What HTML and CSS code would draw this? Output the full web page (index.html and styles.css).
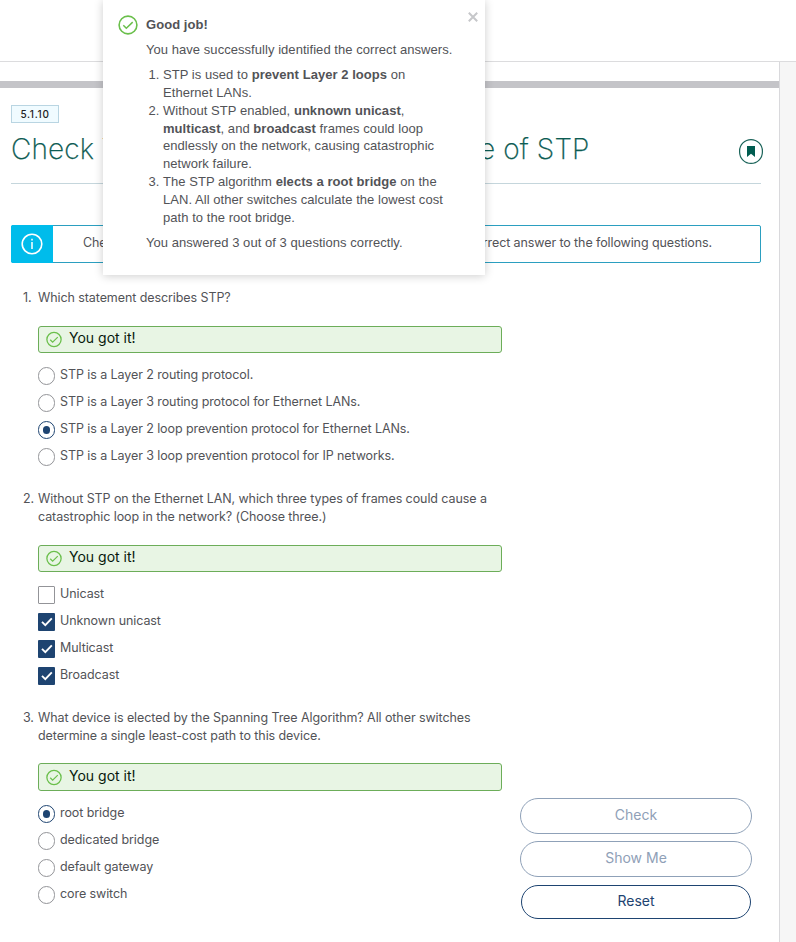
FILE: index.html
```html
<!DOCTYPE html>
<html lang="en">
<head>
<meta charset="utf-8">
<title>Check Your Understanding</title>
<link rel="stylesheet" href="styles.css">
</head>
<body>
<svg class="defs" width="0" height="0">
  <symbol id="ok" viewBox="0 0 20 20"><circle cx="10" cy="10" r="8.9" fill="none" stroke="currentColor" stroke-width="1.6"/><path d="M5.3 10.3l3 3 6.4-6.2" fill="none" stroke="currentColor" stroke-width="1.5"/></symbol>
  <symbol id="tick" viewBox="0 0 17 18"><path d="M4 8.9l3.3 3.2 6.5-6.7" fill="none" stroke="#fff" stroke-width="1.9"/></symbol>
</svg>
<header class="topbar"></header>
<div class="shell">
  <main class="page">
    <div class="strip"></div>
    <div class="content">
      <span class="tag">5.1.10</span>
      <div class="heading">
        <h1>Check Your Understanding - Purpose of STP</h1>
        <svg class="bookmark" viewBox="0 0 24 25"><rect x=".6" y=".6" width="22.8" height="23.8" rx="11.4" fill="#fff" stroke="#1a6359" stroke-width="1.2"/><path d="M8 7h8v11l-4-3.2L8 18z" fill="#005c50"/></svg>
      </div>
      <div class="banner">
        <div class="info"><svg viewBox="0 0 22 22"><circle cx="11" cy="11" r="9.8" fill="none" stroke="#fff" stroke-width="1.6"/><path d="M11 9v7M11 5.8v1.7" stroke="#fff" stroke-width="1.5"/></svg></div>
        <p>Check your understanding of the purpose of STP by choosing the correct answer to the following questions.</p>
      </div>
      <div class="quiz">
        <section class="q q1">
          <div class="stem"><span class="num">1.</span><p>Which statement describes STP?</p></div>
          <div class="alert"><svg><use href="#ok"/></svg><span>You got it!</span></div>
          <div class="opt"><i class="radio"></i><span>STP is a Layer 2 routing protocol.</span></div>
          <div class="opt"><i class="radio"></i><span>STP is a Layer 3 routing protocol for Ethernet LANs.</span></div>
          <div class="opt"><i class="radio on"></i><span>STP is a Layer 2 loop prevention protocol for Ethernet LANs.</span></div>
          <div class="opt"><i class="radio"></i><span>STP is a Layer 3 loop prevention protocol for IP networks.</span></div>
        </section>
        <section class="q q2">
          <div class="stem"><span class="num">2.</span><p>Without STP on the Ethernet LAN, which three types of frames could cause a<br>catastrophic loop in the network? (Choose three.)</p></div>
          <div class="alert"><svg><use href="#ok"/></svg><span>You got it!</span></div>
          <div class="opt"><i class="box"></i><span>Unicast</span></div>
          <div class="opt"><i class="box on"><svg><use href="#tick"/></svg></i><span>Unknown unicast</span></div>
          <div class="opt"><i class="box on"><svg><use href="#tick"/></svg></i><span>Multicast</span></div>
          <div class="opt"><i class="box on"><svg><use href="#tick"/></svg></i><span>Broadcast</span></div>
        </section>
        <section class="q q3">
          <div class="stem"><span class="num">3.</span><p>What device is elected by the Spanning Tree Algorithm? All other switches<br>determine a single least-cost path to this device.</p></div>
          <div class="alert"><svg><use href="#ok"/></svg><span>You got it!</span></div>
          <div class="opt"><i class="radio on"></i><span>root bridge</span></div>
          <div class="opt"><i class="radio"></i><span>dedicated bridge</span></div>
          <div class="opt"><i class="radio"></i><span>default gateway</span></div>
          <div class="opt"><i class="radio"></i><span>core switch</span></div>
        </section>
        <div class="actions">
          <button class="btn" disabled>Check</button>
          <button class="btn" disabled>Show Me</button>
          <button class="btn primary">Reset</button>
        </div>
      </div>
    </div>
  </main>
</div>
<aside class="modal">
  <svg class="modal-ok"><use href="#ok"/></svg>
  <div class="modal-body">
    <p><b>Good job!</b></p>
    <p>You have successfully identified the correct answers.</p>
    <ol>
      <li>STP is used to <b>prevent Layer 2 loops</b> on<br>Ethernet LANs.</li>
      <li>Without STP enabled, <b>unknown unicast</b>,<br><b>multicast</b>, and <b>broadcast</b> frames could loop<br>endlessly on the network, causing catastrophic<br>network failure.</li>
      <li>The STP algorithm <b>elects a root bridge</b> on the<br>LAN. All other switches calculate the lowest cost<br>path to the root bridge.</li>
    </ol>
    <p>You answered 3 out of 3 questions correctly.</p>
  </div>
  <svg class="close" viewBox="0 0 10 10"><path d="M.8.8l8.4 8.4M9.2.8L.8 9.2" stroke="#c6c7ca" stroke-width="2"/></svg>
</aside>
</body>
</html>
```
FILE: styles.css
```css
* { box-sizing: border-box; }
body { margin: 0; height: 942px; overflow: hidden; background: #fff; color: #525357; font: 12.5px/18px Inter, sans-serif; letter-spacing: -.085px; }
p, h1, ol { margin: 0; padding: 0; }
.defs { display: none; }
.topbar { height: 62px; border-bottom: 1px solid #dcdcde; }
.shell { display: flex; height: 880px; background: #f6f6f6; }
.page { width: 780px; background: #fff; border-right: 1px solid #d9d9dc; padding-top: 19px; }
.strip { height: 7px; background: #c4c4c8; }
.content { padding: 17px 18px 0 11px; }
.tag { display: block; width: 48px; height: 18px; border: 1px solid #b9d5e2; background: #f0fbff; color: #222; font-size: 10px; font-weight: 500; line-height: 16px; text-align: center; letter-spacing: .7px; }
.heading { display: flex; justify-content: space-between; height: 61px; border-bottom: 1px solid #c5d6dc; }
h1 { color: #0d5c53; font-size: 28px; line-height: 36px; font-weight: 200; -webkit-text-stroke: .25px #0d5c53; padding-top: 8px; white-space: nowrap; letter-spacing: .13px; }
.bookmark { width: 24px; height: 25px; margin: 16px -2px 0 0; flex: none; }
.banner { display: flex; margin-top: 41px; height: 38px; border: 1px solid #2b9fc0; border-radius: 2px; }
.info { flex: none; width: 42px; margin: -1px 0 -1px -1px; background: #00bceb; border-radius: 2px 0 0 2px; display: flex; align-items: center; justify-content: center; }
.info svg { width: 22px; height: 22px; }
.banner p { padding: 8px 0 0 30px; white-space: nowrap; letter-spacing: -.1px; }
.quiz { display: grid; grid-template-columns: 491px 232px; column-gap: 18px; margin-top: 26px; }
.q { grid-column: 1; white-space: nowrap; }
.q1 { height: 201px; }
.q2 { height: 219px; }
.stem { display: flex; }
.num { flex: none; width: 27px; padding-left: 12px; }
.alert { display: flex; align-items: center; width: 464px; height: 27px; margin: 19px 0 0 27px; padding-left: 7px; gap: 7px; border: 1px solid #6cad59; border-radius: 3px; background: #e8f5e4; color: #07190c; font-size: 14px; letter-spacing: 0; }
.alert svg { width: 16px; height: 17px; color: #6abf4b; }
.alert span { margin-top: -3px; }
.q3 .alert { height: 28px; margin-top: 18px; }
.opt { display: flex; gap: 5px; margin-left: 27px; height: 27px; }
.alert + .opt { margin-top: 13px; }
.radio, .box { flex: none; width: 17px; height: 18px; margin-top: 1px; border: 1px solid #939498; background: #fff; }
.radio { border-radius: 9px; display: flex; align-items: center; justify-content: center; }
.radio.on { border-color: #1e4471; }
.radio.on::after { content: ""; width: 7px; height: 8px; border-radius: 4px; background: #1e4471; }
.box { border-radius: 1px; }
.box.on { background: #1e4471; border: 0; }
.box svg { display: block; width: 17px; height: 18px; }
.actions { grid-column: 2; grid-row: 3; display: flex; flex-direction: column; gap: 7px; padding-top: 89px; height: 211px; }
.btn { height: 36px; flex: none; padding: 0 0 3px; border: 1px solid #8fa1b8; border-radius: 18px; background: #fff; color: #8fa0b7; font: 14px Inter, sans-serif; }
.btn.primary { height: 34px; margin: 1px 1px 0; border-color: #1e4471; color: #1e4471; }
.modal { position: absolute; left: 103px; top: 0; width: 382px; height: 275px; background: #fff; box-shadow: 0 1px 9px rgba(0,0,0,.2); display: flex; padding: 15px 7px 0 15px; color: #525357; font: 13px/17.9px "Liberation Sans", Arial, sans-serif; letter-spacing: .05px; white-space: nowrap; }
.modal-ok { width: 20px; height: 20px; flex: none; color: #6abf4b; }
.modal-body { flex: 1; padding: 1px 0 0 8px; }
.modal-body p { margin-bottom: 7px; }
.modal-body ol { padding-left: 17px; margin-bottom: 7px; }
.close { width: 10px; height: 10px; margin-top: -3px; flex: none; }
```
